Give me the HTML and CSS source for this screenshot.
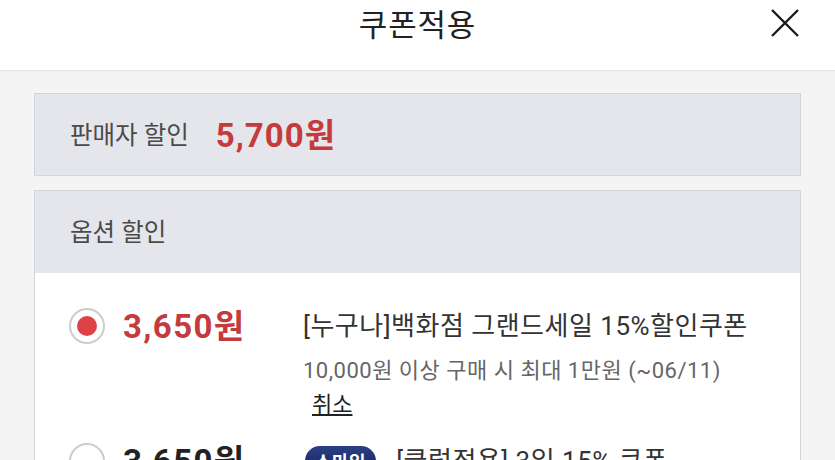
FILE: index.html
```html
<!DOCTYPE html>
<html lang="ko">
<head>
    <meta charset="UTF-8">
    <meta name="viewport" content="width=device-width, initial-scale=1.0">
    <title>쿠폰적용</title>
    <link rel="stylesheet" href="styles.css">
</head>
<body>

    <div class="topbar">
        <span></span>
        <h1 class="title">쿠폰적용</h1>
        <button class="close-btn" aria-label="닫기">
            <svg width="30" height="30" viewBox="0 0 30 30">
                <path d="M2 2 L28 28 M28 2 L2 28" stroke="#1a1a1a" stroke-width="2.4" fill="none"/>
            </svg>
        </button>
    </div>

    <div class="content">
        <div class="seller-box">
            <span class="label">판매자 할인</span>
            <span class="amount">5,700원</span>
        </div>

        <div class="option-box">
            <div class="option-head">
                <span class="label">옵션 할인</span>
            </div>

            <div class="coupon-list">
                <div class="coupon-row">
                    <span class="radio checked"></span>
                    <span class="price red">3,650원</span>
                    <div class="info">
                        <p class="name">[누구나]백화점 그랜드세일 15%할인쿠폰</p>
                        <p class="desc">10,000원 이상 구매 시 최대 1만원 (~06/11)</p>
                        <a class="cancel" href="#">취소</a>
                    </div>
                </div>

                <div class="coupon-row">
                    <span class="radio"></span>
                    <span class="price">3,650원</span>
                    <div class="info">
                        <p class="name"><span class="badge">스마일</span>[클럽적용] 3일 15% 쿠폰</p>
                    </div>
                </div>
            </div>
        </div>
    </div>

</body>
</html>
```

FILE: styles.css
```css
/* General Styles */
body {
    font-family: Roboto, "Noto Sans CJK KR", sans-serif;
    margin: 0;
    padding: 0;
    background-color: #f4f4f5;
    height: 460px;
    overflow: hidden;
    color: #333;
}

.topbar {
    background-color: #fff;
    height: 70px;
    border-bottom: 1px solid #e3e5e9;
    display: grid;
    grid-template-columns: 1fr auto 1fr;
    align-items: center;
}

.title {
    margin: 0;
    font-size: 31px;
    font-weight: 400;
    color: #222;
    padding-bottom: 26px;
    letter-spacing: 0.8px;
}

.close-btn {
    justify-self: end;
    margin-right: 35px;
    margin-bottom: 26px;
    border: none;
    background: none;
    padding: 0;
    width: 30px;
    height: 30px;
    cursor: pointer;
}

.content {
    padding: 22px 34px 0 34px;
}

.seller-box {
    background-color: #e4e6eb;
    border: 1px solid #d2d6dc;
    height: 81px;
    display: flex;
    align-items: center;
    gap: 27px;
    padding-left: 35px;
    padding-bottom: 3px;
    box-sizing: border-box;
    height: 83px;
}

.label {
    font-size: 24.5px;
    color: #4a4a4a;
}

.amount {
    font-size: 33px;
    font-weight: 700;
    color: #c43a3d;
    letter-spacing: 1px;
}

.option-box {
    margin-top: 14px;
    border: 1px solid #d2d6dc;
    background-color: #fff;
}

.option-head {
    background-color: #e4e6eb;
    height: 82px;
    display: flex;
    align-items: center;
    padding-left: 35px;
    padding-bottom: 4px;
    box-sizing: border-box;
}

.coupon-list {
    padding-top: 10px;
}

.coupon-row {
    display: grid;
    grid-template-columns: 36px 162px 1fr;
    column-gap: 18px;
    padding: 25px 34px 0 34px;
}

.coupon-row + .coupon-row {
    padding-top: 23px;
}

.radio {
    width: 36px;
    height: 36px;
    border: 2px solid #cdcdcd;
    border-radius: 50%;
    box-sizing: border-box;
    display: flex;
    align-items: center;
    justify-content: center;
}

.radio.checked::after {
    content: "";
    width: 20px;
    height: 20px;
    border-radius: 50%;
    background-color: #de4146;
}

.price {
    font-size: 33px;
    font-weight: 700;
    color: #222;
    line-height: 38px;
    letter-spacing: 1.4px;
}

.price.red {
    color: #c43a3d;
}

.info p {
    margin: 0;
}

.name {
    font-size: 26px;
    color: #333;
    line-height: 36px;
    letter-spacing: 0.5px;
}

.desc {
    font-size: 22px;
    color: #666;
    margin-top: 12px !important;
    line-height: 30px;
    letter-spacing: 0.5px;
}

.cancel {
    display: inline-block;
    margin-left: 9px;
    margin-top: 4px;
    font-size: 22px;
    line-height: 30px;
    color: #222;
    text-decoration: underline;
}

.badge {
    display: inline-block;
    background: linear-gradient(#2b3f86, #101c4c);
    color: #fff;
    font-size: 18px;
    font-weight: 700;
    line-height: 30px;
    border-radius: 15px;
    padding: 2px 10px;
    margin-left: 2px;
    margin-right: 20px;
    vertical-align: middle;
}
```
